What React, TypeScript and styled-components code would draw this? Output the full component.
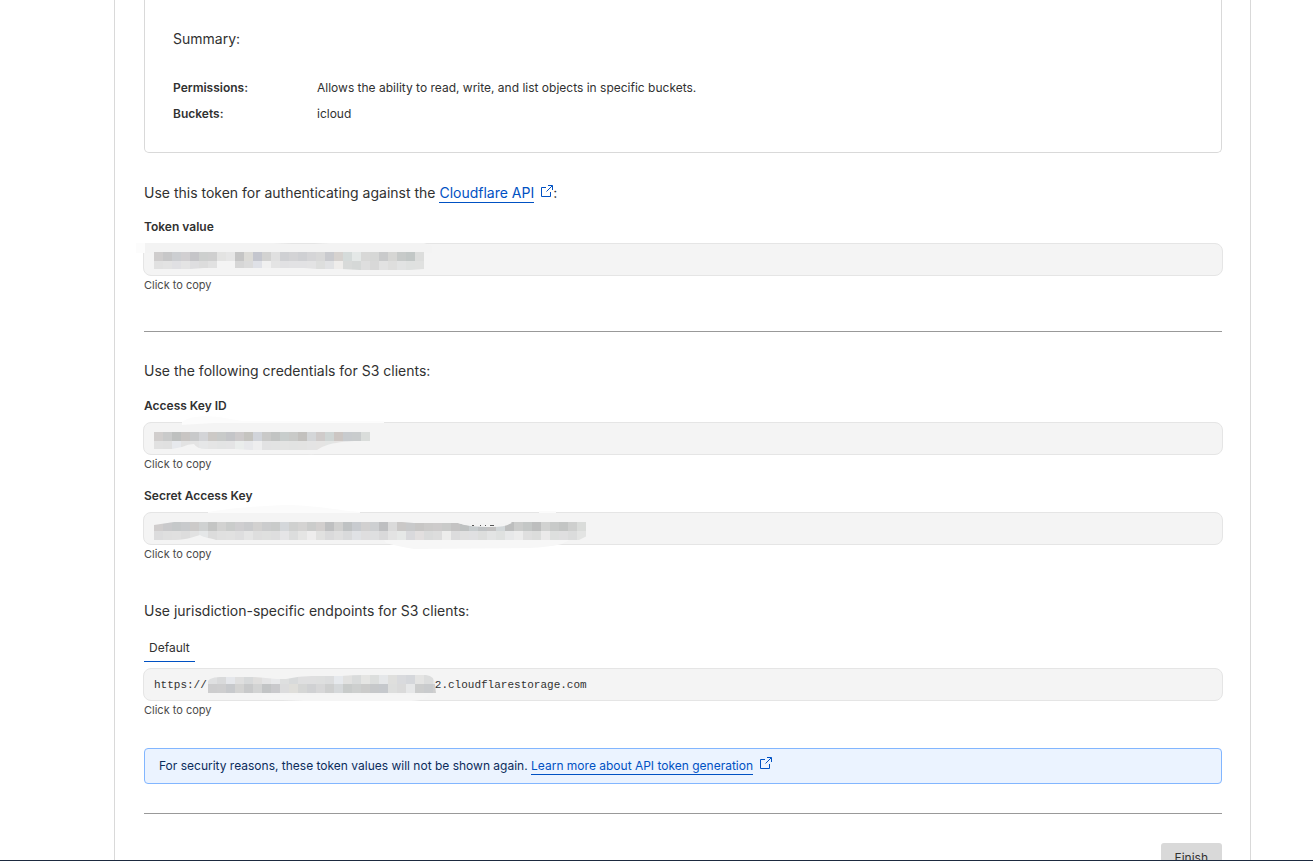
import React from 'react';
import styled, { createGlobalStyle } from 'styled-components';

const GlobalStyle = createGlobalStyle`
  * { box-sizing: border-box; }
  body {
    margin: 0;
    background: #fff;
    color: #313131;
    font-family: Inter, "Liberation Sans", sans-serif;
    font-size: 12px;
    line-height: 20px;
  }
`;

const Screen = styled.div`
  display: flex;
  flex-direction: column;
  height: 100vh;
  border-bottom: 1px solid #1d2a3f;
`;

const Viewport = styled.div`
  flex: 1;
  min-height: 0;
  overflow: hidden;
  padding: 0 62px 0 114px;
`;

const Panel = styled.main`
  padding: 0 28px 40px 29px;
  border: solid #d9d9d9;
  border-width: 0 1px;
`;

const SummaryCard = styled.section`
  padding: 28px 28px 28px;
  border: 1px solid #d9d9d9;
  border-top: 0;
  border-radius: 0 0 5px 5px;
`;

const Lead = styled.h2<{ $top?: number; $bottom?: number }>`
  margin: ${(p) => p.$top ?? 0}px 0 ${(p) => p.$bottom ?? 0}px;
  font-size: 14px;
  font-weight: 400;
  line-height: 22px;
`;

const SummaryList = styled.dl`
  display: grid;
  grid-template-columns: 144px 1fr;
  row-gap: 6px;
  margin: 0;
`;

const Term = styled.dt`
  font-weight: 600;
`;

const Detail = styled.dd`
  margin: 0;
`;

const Link = styled.a`
  color: #0051c3;
  text-decoration: none;
`;

const LinkText = styled.span`
  padding-bottom: 1px;
  border-bottom: 1px solid #0051c3;
`;

const LinkIcon = styled.svg`
  width: 13px;
  height: 13px;
  margin-left: 6px;
  fill: none;
  stroke: currentColor;
`;

const FieldGroup = styled.div<{ $top?: number }>`
  display: flex;
  flex-direction: column;
  margin-top: ${(p) => p.$top ?? 0}px;
`;

const FieldLabel = styled.label`
  margin-bottom: 6px;
  font-weight: 600;
`;

const CopyField = styled.button`
  position: relative;
  display: flex;
  align-items: center;
  height: 33px;
  margin: 0 -1px;
  padding: 0 10px;
  border: 1px solid #e5e5e5;
  border-radius: 8px;
  background: #f4f4f4;
  color: #313131;
  font-family: "Liberation Mono", monospace;
  font-size: 11px;
  text-align: left;
  cursor: pointer;
`;

const HiddenPart = styled.span`
  width: 228px;
`;

const Hint = styled.span`
  color: #4a4a4a;
  font-size: 11px;
  line-height: 19px;
`;

const Redaction = styled.svg`
  position: absolute;
  top: 0;
  left: 0;
  overflow: visible;
  pointer-events: none;
`;

const Rule = styled.hr<{ $top: number }>`
  margin: ${(p) => p.$top}px 0 0;
  border: 0;
  border-top: 1px solid #999;
`;

const TabList = styled.div`
  display: flex;
  margin-bottom: 6px;
`;

const Tab = styled.button`
  height: 28px;
  padding: 0 5px;
  border: 0;
  border-bottom: 1px solid #0051c3;
  background: none;
  color: inherit;
  font: inherit;
`;

const Notice = styled.aside`
  margin-top: 28px;
  padding: 7px 14px;
  border: 1px solid #82b6ff;
  border-radius: 4px;
  background: #ebf3ff;
  color: #0c2c5c;
`;

const Actions = styled.div`
  display: flex;
  justify-content: flex-end;
  margin-top: 29px;
`;

const FinishButton = styled.button`
  height: 30px;
  padding: 0 14px;
  border: 0;
  border-radius: 3px;
  background: #d9d9d9;
  color: #313131;
  font: inherit;
`;

const ExternalIcon = () => (
  <LinkIcon viewBox="0 0 13 13" aria-hidden="true">
    <path d="M6 2.5H1.5v9h9V7" />
    <path d="M8 .5h4.5V5M12.2.8 6.5 6.5" />
  </LinkIcon>
);

type MosaicProps = {
  id: string;
  x: number;
  y: number;
  rows: string[];
  outline: string;
  smear?: React.ReactNode;
  over?: React.ReactNode;
};

/* Each row is a list of grey cells nine pixels wide; "-" leaves a cell empty. */
const Mosaic = ({ id, x, y, rows, outline, smear, over }: MosaicProps) => (
  <Redaction width="460" height="31" aria-hidden="true">
    {smear}
    <clipPath id={id}>
      <path d={outline} />
    </clipPath>
    <g clipPath={`url(#${id})`} shapeRendering="crispEdges">
      {rows.map((row, r) =>
        row.split(' ').map((c, i) =>
          c === '-' ? null : (
            <rect key={`${r}-${i}`} x={x + i * 9} y={y + r * 9} width="9" height="9" fill={`#${c}`} />
          ),
        ),
      )}
    </g>
    {over}
  </Redaction>
);

const TokenMosaic = () => (
  <Mosaic
    id="mask-token"
    x={10}
    y={8}
    rows={[
      'cfcdcd c7c7c8 ccced1 d1cfd1 c5c5c8 cdcfce cfcfcf e3e3e2 e6e6e6 c5c5c5 dcdbd7 c4c6ce d2d2d1 e0e0e0 cfd0d3 d3d3d5 cfd0d3 d5d5d7 d8d8d8 c9cace d6d2cf d5dbda e4e8e7 d8d8d7 d6d7d6 c9cacb d6d6d4 c7cac9 c2c7c6 dcdddc',
      'e1e1e1 e3e3e3 e0e0e3 e4e4e4 dedee0 dcdcdc e1e1e1 - - d6d6d6 dbdbdb dfe1e7 f0f0f0 e4e4e4 e1e1e3 e2e2e4 e2e2e4 e3e3e4 dddedd e1e2e4 efedeb d8dad9 d5d8d7 dedede d8d8d8 e2e2e2 dededd e2e3e3 dfe1e0 e0e1e0',
    ]}
    outline="M10 8H280V25L266 26H216L198 25H173L160 24H60L46 25H10Z"
    smear={
      <>
        <path d="M-8-1H1V9H-8Z" fill="#fcfcfc" />
        <path d="M1-1H129L148 0H170L186-1H280L288 2V9H1Z" fill="#f3f3f3" />
      </>
    }
  />
);

const AccessMosaic = () => (
  <Mosaic
    id="mask-access"
    x={10}
    y={9}
    rows={[
      'd1cecd c9caca bec0bf c8c5c3 c8c9ca d3d4d7 ccc9c6 c8cac9 c4c5c8 cdcacb c5c4c0 d1d4da c9c9c8 c2c4c3 c8cdcc c9cac8 c3c1be d4d6d8 cfcbca cfd5d4 ccc6c3 c8cbce c9cccd dadddb',
      'e1e1e1 e0e0e0 e7e9ed e3e3e3 e4e4e4 e6e7e8 e5e5e5 e3e4e4 e4e4e5 eaedec e7e8eb eeeeef e2e2e3 e2e3e3 e3e4e3 e2e3e2 e3e3e2 e4e4e4 e5e4e3 e3e5e4 e6e4e3 e4e5e6 e4e5e5 e8e9e8',
    ]}
    outline="M10 9H226V18H210C196 19 187 20 178 24L173 27H107L90 26H62Q53 26 50 21Q44 21 38 24L28 26H10Z"
    smear={
      <>
        <path d="M38-1C44-6 57-8 75-6L98-2H240V2H38Z" fill="#fcfcfc" />
        <path d="M2 4 70 0H240V20L178 29Q170 33 158 30L2 25Z" fill="#f4f4f4" />
      </>
    }
  />
);

const SecretMosaic = () => (
  <Mosaic
    id="mask-secret"
    x={10}
    y={9}
    rows={[
      'd0cdcd c9c9cb c5c8c9 c8cacc cccac9 cfd1d1 c4c5c4 d2d2d1 cacccb cfced0 cacbcd d2d1d0 cbcccd c9cbca d4d7da cfd0cf d4d3d2 cbcccb d2cfce bfc0c1 d0d0cf bfc2c3 c8cbcf d1d0d0 cdcfd1 bebfc1 dadada cac8c7 c8c9ca c7c6c5 cbcac9 cdcbcb c9cac9 c4c3c3 bec1c1 c7ccce bfc2c4 c3c2c2 d2d7d9 bdbebe cbcccb c4c7c6 bdbebe d1d2d1 c8cac9 c3c5c4 cecfce dadcda',
      'dcdcdd dfdfdf e0e0e0 dddddd e2e2e2 e5e7e8 dcdcdc e0e0e0 e1e1e1 dededf e5e5e5 dedede dfe0df dededf e5e5e7 dcdddd e5e5e4 eeeded e1e1e0 dadadb dfdfdf d9dadb e0e2e5 dfdedf dedfe0 d9d9da e3e3e3 e6e8e7 d9d9dc e2dfdf dadbdb dddddd ededec dcdcdd e0e0e0 e0e0e2 dddedd e3e4e4 dfe1e0 e7e8e9 ececec dfdfdf dcdddc ebeaea dddfde dfdfe0 dbdcdc e3e4e3',
    ]}
    outline="M10 12 30 9H258L270 10H314C323 13 331 14 348 14Q364 14 368 9H443V23L435 27H72C67 25 60 25 56 22C47 25 39 27 28 27H10Z"
    smear={
      <>
        <path d="M64-1C90-5 113-7 144-8C178-7 191-3 216-1V3H64Z" fill="#fbfbfb" />
        <path d="M395-2H412V2H395Z" fill="#fbfbfb" />
        <path d="M64 0H412V9H64Z" fill="#f4f4f4" />
        <path d="M240 27H425L418 31Q405 34 385 35L270 36Q252 33 242 30Z" fill="#f7f7f7" />
      </>
    }
    over={
      <>
        <path d="M314 10H368Q356 14 340 13Q322 13 314 10Z" fill="#f3f3f3" />
        <path d="M328 12.5h2M336 12.5h1M341 12.5h1M346 12.5h4" stroke="#555" />
      </>
    }
  />
);

const EndpointMosaic = () => (
  <Mosaic
    id="mask-endpoint"
    x={64}
    y={6}
    rows={[
      'dfe0e1 d9dadb e5e7eb dfdfdf d7d9da dfdedd e4e4e5 e8e9eb dedfdf d8dadb dfdfe0 dfdfe0 dedfdf dcddde e6e9ed e1e1e0 d9dbdb e5e5e3 dcdedd e5e7e9 dfdfdd d9dadd d5d7db e4e4e3 dcdddd e5e6e6',
      'cdcdce cececf c7c9cc d3d3d2 c8c9ca d2d3d3 c2c4c5 c9c9cc dcdcdd dfdeda d5d6d5 d0d1d3 d7d7d8 cecfcf d5d8da c8cbca cdcfce cbcbca c6c8ca c5c8cc dddedd dadada e6e7e8 cccdcd c9cbcd cfcfcf',
    ]}
    outline="M63 19Q61 14 66 10Q70 8 76 8H110Q123 9 132 10H142Q155 7 168 7H197Q208 6 219 6H282Q291 7 291 16L292 24H63Z"
    smear={<path d="M118 26H286L280 30Q274 32 262 32H160L118 30Z" fill="#f5f5f5" />}
  />
);

const App = () => (
  <>
    <GlobalStyle />
    <Screen>
      <Viewport>
        <Panel>
          <SummaryCard>
            <Lead $bottom={28}>Summary:</Lead>
            <SummaryList>
              <Term>Permissions:</Term>
              <Detail>Allows the ability to read, write, and list objects in specific buckets.</Detail>
              <Term>Buckets:</Term>
              <Detail>icloud</Detail>
            </SummaryList>
          </SummaryCard>

          <Lead $top={29} $bottom={13}>
            Use this token for authenticating against the{' '}
            <Link href="#cloudflare-api">
              <LinkText>Cloudflare API</LinkText>
              <ExternalIcon />
            </Link>
            :
          </Lead>
          <FieldGroup>
            <FieldLabel htmlFor="token">Token value</FieldLabel>
            <CopyField id="token" type="button">
              <TokenMosaic />
            </CopyField>
            <Hint>Click to copy</Hint>
          </FieldGroup>

          <Rule $top={36} />

          <Lead $top={28} $bottom={14}>
            Use the following credentials for S3 clients:
          </Lead>
          <FieldGroup>
            <FieldLabel htmlFor="access-key">Access Key ID</FieldLabel>
            <CopyField id="access-key" type="button">
              <AccessMosaic />
            </CopyField>
            <Hint>Click to copy</Hint>
          </FieldGroup>
          <FieldGroup $top={12}>
            <FieldLabel htmlFor="secret-key">Secret Access Key</FieldLabel>
            <CopyField id="secret-key" type="button">
              <SecretMosaic />
            </CopyField>
            <Hint>Click to copy</Hint>
          </FieldGroup>

          <Lead $top={36} $bottom={12}>
            Use jurisdiction-specific endpoints for S3 clients:
          </Lead>
          <TabList role="tablist">
            <Tab type="button" role="tab" aria-selected="true">
              Default
            </Tab>
          </TabList>
          <FieldGroup>
            <CopyField type="button">
              <span>https://</span>
              <HiddenPart />
              <span>2.cloudflarestorage.com</span>
              <EndpointMosaic />
            </CopyField>
            <Hint>Click to copy</Hint>
          </FieldGroup>

          <Notice>
            For security reasons, these token values will not be shown again.{' '}
            <Link href="#api-tokens">
              <LinkText>Learn more about API token generation</LinkText>
              <ExternalIcon />
            </Link>
          </Notice>

          <Rule $top={29} />

          <Actions>
            <FinishButton type="button">Finish</FinishButton>
          </Actions>
        </Panel>
      </Viewport>
    </Screen>
  </>
);

export default App;
